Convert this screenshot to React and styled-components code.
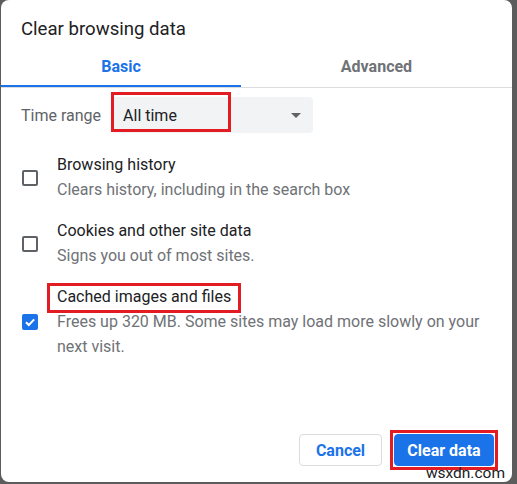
import React from 'react';
import styled, { createGlobalStyle } from 'styled-components';

const GlobalStyle = createGlobalStyle`
  html, body {
    margin: 0;
    padding: 0;
    background: #5c5c5c;
  }
  body {
    font-family: Roboto, "Liberation Sans", Arial, sans-serif;
    color: #202124;
  }
`;

const Dialog = styled.div`
  position: relative;
  width: 511px;
  height: 482px;
  margin-left: 1px;
  background: #fff;
  border-radius: 8px;
  display: flex;
  flex-direction: column;
  overflow: hidden;
`;

const Title = styled.h2`
  margin: 0;
  padding: 17px 20px 0;
  font-size: 18.6px;
  font-weight: 400;
  line-height: 24px;
  color: #202124;
`;

const Tabs = styled.div`
  display: grid;
  grid-template-columns: 240px 1fr;
  height: 43px;
  margin-top: 3px;
  border-bottom: 1px solid #dadce0;
`;

const Tab = styled.div`
  display: flex;
  align-items: center;
  justify-content: center;
  font-size: 16px;
  font-weight: 700;
  color: ${p => (p.active ? '#1a73e8' : '#6f7276')};
  border-bottom: 2px solid ${p => (p.active ? '#1a73e8' : 'transparent')};
  padding-top: 4px;
`;

const RangeRow = styled.div`
  display: flex;
  align-items: center;
  gap: 10px;
  padding: 9px 20px 0;
`;

const Label = styled.span`
  font-size: 16px;
  color: #5f6368;
`;

const Select = styled.div`
  position: relative;
  width: 202px;
  height: 36px;
  background: #f1f3f4;
  border-radius: 4px;
  display: flex;
  align-items: center;
  justify-content: space-between;
  padding: 0 8px 0 12px;
  box-sizing: border-box;
  font-size: 16px;
  color: #202124;
`;

const Arrow = styled.span`
  width: 0;
  height: 0;
  border-left: 5px solid transparent;
  border-right: 5px solid transparent;
  border-top: 5px solid #5f6368;
  margin-right: 4px;
`;

const Highlight = styled.span`
  position: absolute;
  border: 3px solid #e31b23;
  pointer-events: none;
  box-sizing: border-box;
  left: ${p => p.left}px;
  top: ${p => p.top}px;
  width: ${p => p.w}px;
  height: ${p => p.h}px;
`;

const List = styled.div`
  display: flex;
  flex-direction: column;
  gap: 17px;
  padding: 20px 21px 0;
`;

const Item = styled.div`
  display: flex;
  align-items: center;
  gap: 19px;
`;

const Box = styled.span`
  flex: none;
  width: 16px;
  height: 16px;
  box-sizing: border-box;
  border-radius: 2px;
  border: 2px solid ${p => (p.checked ? '#1a73e8' : '#5f6368')};
  background: ${p => (p.checked ? '#1a73e8' : 'transparent')};
  display: flex;
  align-items: center;
  justify-content: center;
`;

const Texts = styled.div`
  display: flex;
  flex-direction: column;
`;

const ItemTitle = styled.span`
  position: relative;
  align-self: flex-start;
  font-size: 16px;
  line-height: 24px;
  color: #202124;
`;

const ItemDesc = styled.span`
  font-size: 16px;
  line-height: 25px;
  color: #6f7276;
`;

const Footer = styled.div`
  margin-top: auto;
  display: flex;
  justify-content: flex-end;
  align-items: center;
  gap: 8px;
  padding: 0 14px 12px;
`;

const Button = styled.button`
  height: 32px;
  width: ${p => p.w}px;
  padding: 0;
  border-radius: 4px;
  font-family: inherit;
  font-size: 16px;
  font-weight: 700;
  border: 1px solid ${p => (p.primary ? '#1a73e8' : '#dadce0')};
  background: ${p => (p.primary ? '#1a73e8' : '#fff')};
  color: ${p => (p.primary ? '#fff' : '#1a73e8')};
`;

const Outline = styled.span`
  display: inline-flex;
  border: 3px solid #e31b23;
  padding: 1px;
`;

const Watermark = styled.span`
  position: absolute;
  right: 7px;
  bottom: 0px;
  font-size: 15.5px;
  line-height: 17px;
  color: #202124;
`;

const Check = () => (
  <svg width="12" height="12" viewBox="0 0 12 12">
    <path d="M2 6.2 L4.8 9 L10.2 3.4" fill="none" stroke="#fff" strokeWidth="2" />
  </svg>
);

const items = [
  { title: 'Browsing history', desc: 'Clears history, including in the search box' },
  { title: 'Cookies and other site data', desc: 'Signs you out of most sites.' },
  {
    title: 'Cached images and files',
    desc: 'Frees up 320 MB. Some sites may load more slowly on your next visit.',
    checked: true,
    marked: true
  }
];

export default function App() {
  return (
    <>
      <GlobalStyle />
      <Dialog>
        <Title>Clear browsing data</Title>
        <Tabs>
          <Tab active>Basic</Tab>
          <Tab>Advanced</Tab>
        </Tabs>
        <RangeRow>
          <Label>Time range</Label>
          <Select>
            <span>All time</span>
            <Arrow />
            <Highlight left={0} top={-5} w={120} h={40} />
          </Select>
        </RangeRow>
        <List>
          {items.map(item => (
            <Item key={item.title}>
              <Box checked={item.checked}>{item.checked && <Check />}</Box>
              <Texts>
                <ItemTitle>
                  {item.title}
                  {item.marked && <Highlight left={-10} top={-2} w={194} h={30} />}
                </ItemTitle>
                <ItemDesc>{item.desc}</ItemDesc>
              </Texts>
            </Item>
          ))}
        </List>
        <Footer>
          <Button w={83}>Cancel</Button>
          <Outline>
            <Button primary w={100}>Clear data</Button>
          </Outline>
        </Footer>
        <Watermark>wsxdn.com</Watermark>
      </Dialog>
    </>
  );
}
